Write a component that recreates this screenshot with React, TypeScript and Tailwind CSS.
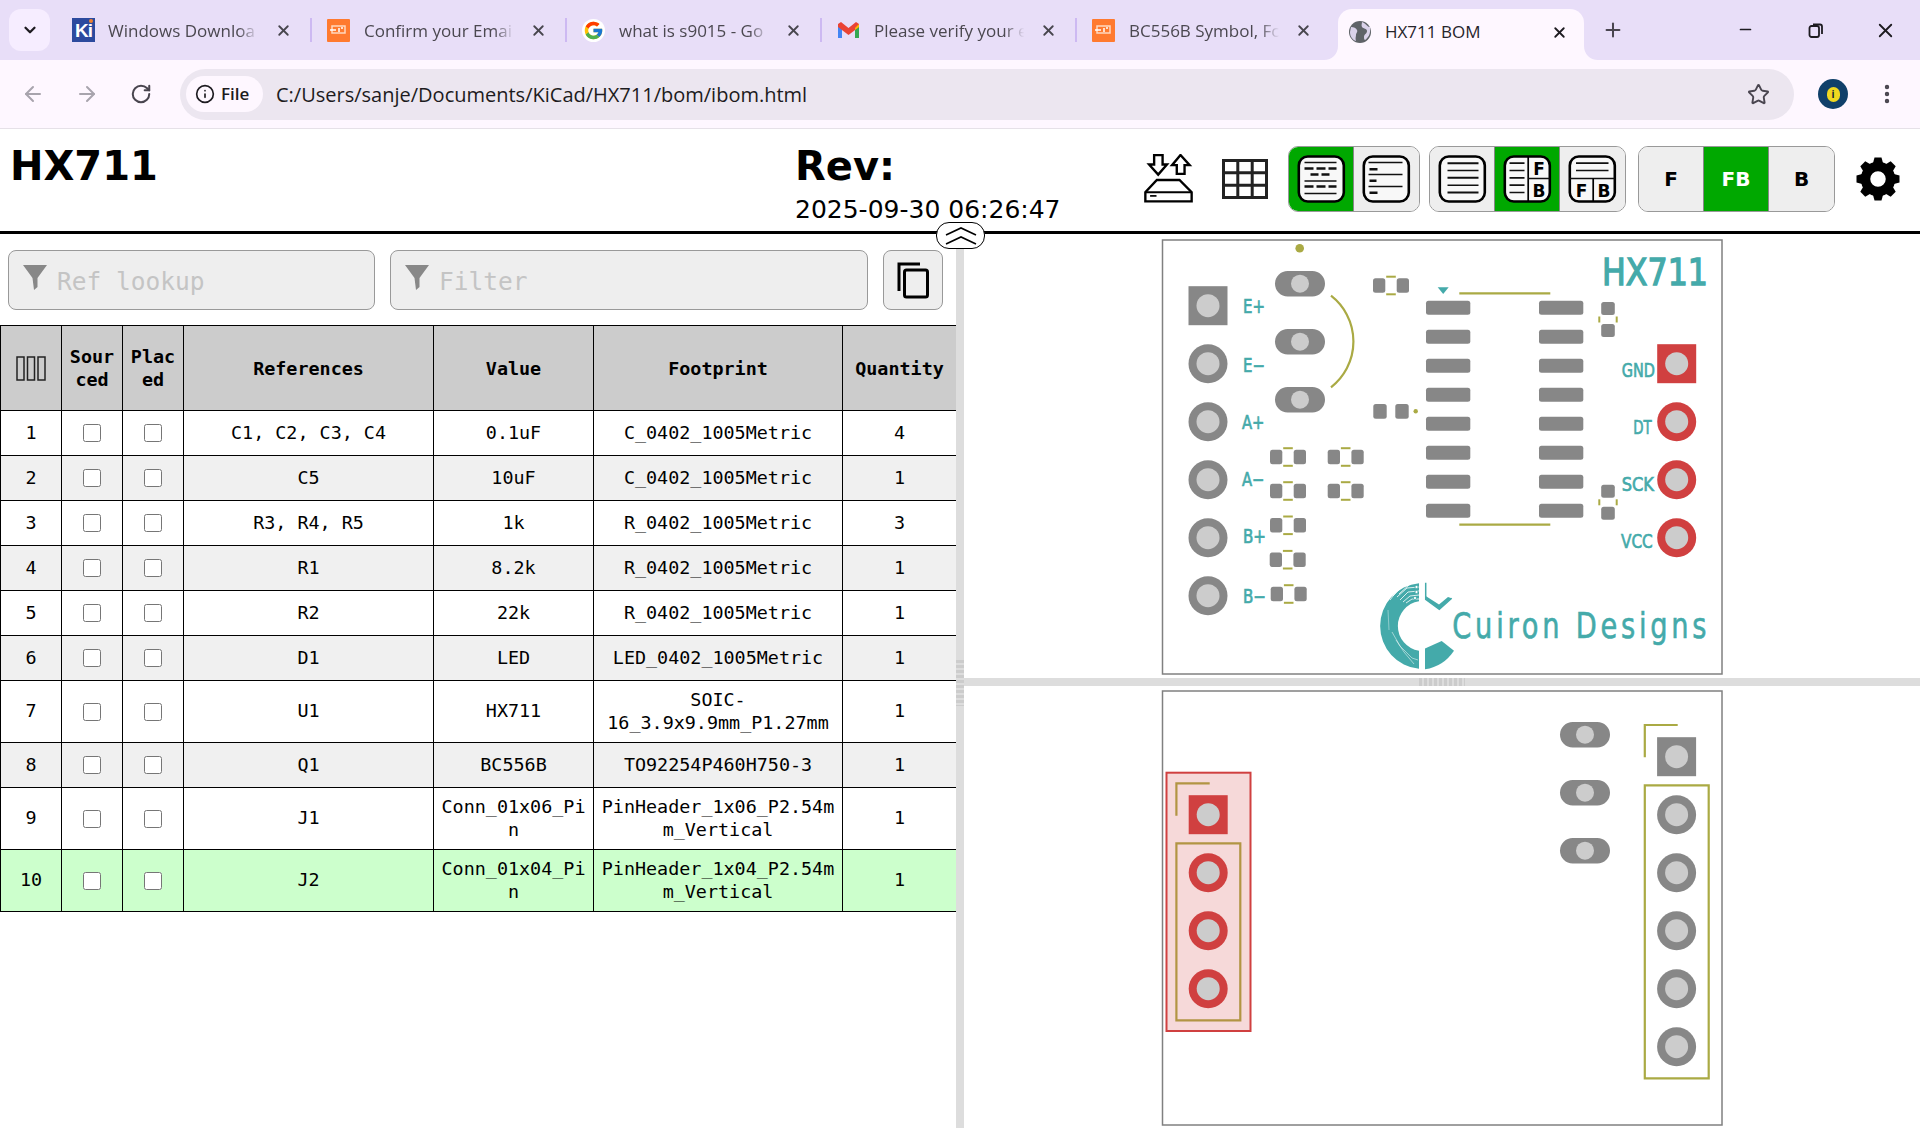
import React from "react";
import { FcGoogle } from "react-icons/fc";
import { ArrowLeft, ArrowRight, RotateCw, Info, Star, EllipsisVertical, Plus, X, ChevronDown, Minus } from "lucide-react";

const PAD = "#878787";
const HOLE = "#cccccc";
const RED = "#d04040";
const SILK = "#aaaa44";
const TEAL = "#44aaaa";

function Orange() {
  return (
    <svg width="23" height="23" viewBox="0 0 23 23" className="shrink-0">
      <rect width="23" height="23" fill="#ff7a2f" rx="1" />
      <rect x="5" y="7" width="13" height="7" fill="none" stroke="#ffd9c0" strokeWidth="1.5" />
      <path d="M3 11h6M12 9v4M15 8v2" stroke="#fff" strokeWidth="1.5" />
    </svg>
  );
}
function KiIcon() {
  return (
    <div className="relative w-[23px] h-[24px] shrink-0 bg-[#2c4a9e] flex items-center justify-center text-white font-bold text-[19px] leading-none font-['Liberation_Sans',sans-serif] tracking-[-1px]">
      Ki
      <div className="absolute right-[2px] top-[1px] w-[4px] h-[4px] bg-[#f08030] rounded-full" />
    </div>
  );
}
function GoogleIcon() {
  return (
    <div className="w-[23px] h-[23px] shrink-0 rounded-full bg-white flex items-center justify-center">
      <FcGoogle size={21} />
    </div>
  );
}
function GmailIcon() {
  return (
    <svg width="23" height="23" viewBox="0 0 23 23" className="shrink-0">
      <path d="M1 5v14h4V9z" fill="#4285f4" />
      <path d="M22 5v14h-4V9z" fill="#34a853" />
      <path d="M1 5l3-2 7.5 6L19 3l3 2v3l-10.500 8L1 8z" fill="#ea4335" />
      <path d="M18 9l4-4v3l-4 3z" fill="#fbbc04" />
    </svg>
  );
}
function GlobeIcon() {
  return (
    <svg width="22" height="22" viewBox="0 0 22 22" className="shrink-0">
      <circle cx="11" cy="11" r="11" fill="#5f6368" />
      <path d="M2 6c3 0 5 1 6 3s-1 3-1 5-1 3 0 6c-3-1-6-4-6-9zM20 6c-2-1-4-4-7-5 0 2-1 3 0 5s5 1 5 4-3 3-3 6 1 3 1 3c3-2 6-6 5-13z" fill="#e8def8" opacity="0.9" />
    </svg>
  );
}

const tabs = [
  { icon: <KiIcon />, text: "Windows Downloa", sep: true, ml: "ml-[13px]", xl: "ml-[12px]" },
  { icon: <Orange />, text: "Confirm your Emai", sep: true, ml: "ml-[14px]", xl: "ml-[11px]" },
  { icon: <GoogleIcon />, text: "what is s9015 - Go", sep: true, ml: "ml-[14px]", xl: "ml-[11px]" },
  { icon: <GmailIcon />, text: "Please verify your e", sep: true, ml: "ml-[14px]", xl: "ml-[11px]" },
  { icon: <Orange />, text: "BC556B Symbol, Fc", sep: false, ml: "ml-[14px]", xl: "ml-[11px]" },
];

function TabBar() {
  return (
    <div className="h-[60px] bg-[#e8def8] flex shrink-0 font-['Open_Sans',sans-serif]">
      <div className="ml-[9px] mt-[9px] w-[41px] h-[42px] rounded-[12px] bg-[#f6edff] flex items-center justify-center text-[#1d1b20]">
        <ChevronDown size={18} strokeWidth={3} />
      </div>
      <div className="ml-[7px] flex">
        {tabs.map((t) => (
          <div key={t.text} className="relative w-[255px] h-[60px] flex items-center pl-[15px]">
            <div className="w-[23px] flex justify-center">{t.icon}</div>
            <div className={t.ml + " w-[155px] pt-[2px] overflow-hidden whitespace-nowrap text-[17px] text-[#4b4850] [mask-image:linear-gradient(90deg,#000_84%,transparent_97%)]"}>
              {t.text}
            </div>
            <X size={17} strokeWidth={2.6} className={t.xl + " text-[#47454d]"} />
            {t.sep && <div className="absolute right-0 top-[18px] w-[2px] h-[24px] bg-[#cdb9f2]" />}
          </div>
        ))}
      </div>
      <div className="relative ml-[6px] mt-[9px] w-[246px] h-[51px] rounded-t-[14px] bg-[#fef7ff] flex items-center pl-[11px] pb-[5px]">
        <GlobeIcon />
        <div className="ml-[14px] w-[166px] overflow-hidden whitespace-nowrap text-[17px] text-[#26242a]">HX711 BOM</div>
        <X size={17} strokeWidth={2.6} className="text-[#1d1b20]" />
        <svg className="absolute -left-[14px] bottom-0" width="14" height="14" viewBox="0 0 14 14">
          <path d="M14 0v14H0c8 0 14-6 14-14z" fill="#fef7ff" />
        </svg>
        <svg className="absolute -right-[14px] bottom-0" width="14" height="14" viewBox="0 0 14 14">
          <path d="M0 0v14h14C6 14 0 8 0 0z" fill="#fef7ff" />
        </svg>
      </div>
      <Plus size={22} strokeWidth={2.2} className="ml-[18px] mt-[19px] text-[#49454f]" />
      <Minus size={17} strokeWidth={2.4} className="ml-[113px] mt-[21px] text-[#1d1b20]" />
      <svg width="18" height="18" viewBox="0 0 18 18" className="ml-[53px] mt-[21px]">
        <rect x="2.500" y="5" width="9.500" height="11" rx="2" fill="none" stroke="#1d1b20" strokeWidth="1.800" />
        <path d="M6 3.500 H13 A2 2 0 0 1 15 5.500 V13" fill="none" stroke="#1d1b20" strokeWidth="1.800" />
      </svg>
      <X size={23} strokeWidth={1.900} className="ml-[49px] mt-[19px] text-[#1d1b20]" />
    </div>
  );
}

function Toolbar() {
  return (
    <div className="h-[69px] shrink-0 bg-[#fef7ff] border-b border-[#e6e1e8] flex items-center font-['Open_Sans',sans-serif]">
      <ArrowLeft size={24} strokeWidth={2} className="ml-[21px] text-[#a8a4ad]" />
      <ArrowRight size={24} strokeWidth={2} className="ml-[30px] text-[#a8a4ad]" />
      <RotateCw size={22} strokeWidth={2.200} className="ml-[31px] text-[#49454f]" />
      <div className="ml-[28px] w-[1614px] h-[51px] rounded-full bg-[#ece6f0] flex items-center pl-[6px]">
        <div className="w-[77px] h-[36px] rounded-full bg-[#fef7ff] flex items-center pl-[9px] gap-[6px] text-[#1d1b20] text-[17px] font-semibold">
          <Info size={20} strokeWidth={2} />
          File
        </div>
        <div className="ml-[13px] pt-[2px] text-[20px] text-[#1d1b20] whitespace-nowrap">C:/Users/sanje/Documents/KiCad/HX711/bom/ibom.html</div>
        <Star size={23} strokeWidth={2} className="ml-auto mr-[24px] text-[#49454f]" />
      </div>
      <div className="ml-[24px] w-[30px] h-[30px] rounded-full bg-[#10406a] flex items-center justify-center">
        <div className="w-[13px] h-[15px] rounded-full bg-[#f0d820] flex items-center justify-center text-[10px] font-bold text-[#123] leading-none">i</div>
      </div>
      <EllipsisVertical size={24} strokeWidth={2.400} className="ml-[27px] text-[#49454f]" />
    </div>
  );
}

function Frame({ children }: { children?: React.ReactNode }) {
  return (
    <svg width="65" height="64" viewBox="0.500 0.500 65 64" className="shrink-0">
      <rect x="10.300" y="10" width="45" height="45" rx="9" fill="#f8f8f8" stroke="#000" strokeWidth="2.600" />
      {children}
    </svg>
  );
}
function L({ x1, x2, y, w = 1.300 }: { x1: number; x2: number; y: number; w?: number }) {
  return <line x1={x1} x2={x2} y1={y} y2={y} stroke="#111" strokeWidth={w} />;
}
const iconLetter = "fill-black font-bold text-[17px] font-['DejaVu_Sans',sans-serif]";

function Icon1() {
  const dash = (y: number, xs: number[][]) => xs.map((x, i) => <L key={y + "-" + i} x1={x[0]} x2={x[1]} y={y} w={2.400} />);
  const three = [[16, 25], [28, 37], [40, 48]];
  return (
    <Frame>
      <L x1={16} x2={48} y={16} />
      {dash(22, three)}
      {dash(28, [[22, 30], [33, 41]])}
      <L x1={16} x2={48} y={34.500} />
      {dash(40, three)}
      <L x1={16} x2={48} y={47} />
    </Frame>
  );
}
function Icon2() {
  return (
    <Frame>
      <L x1={15} x2={49} y={16} />
      <L x1={16} x2={24} y={22.700} w={2.400} />
      <L x1={15} x2={49} y={28} />
      <L x1={16} x2={23} y={34.300} w={2.400} />
      <L x1={15} x2={49} y={40} />
      <L x1={16} x2={24} y={46.300} w={2.400} />
    </Frame>
  );
}
function Icon3() {
  return (
    <Frame>
      {[16.700, 24, 31.300, 38.700, 46].map((y, i) => (
        <L key={y} x1={18} x2={49} y={y} w={i % 2 ? 1.500 : 2} />
      ))}
    </Frame>
  );
}
function Icon4() {
  return (
    <Frame>
      {[16.700, 24, 31.300, 38.700, 46].map((y) => (
        <L key={y} x1={15} x2={30} y={y} w={1.700} />
      ))}
      <line x1={33.700} x2={33.700} y1={10} y2={55} stroke="#000" strokeWidth={1.700} />
      <L x1={33.700} x2={55} y={32} w={1.700} />
      <text x={44.500} y={28} textAnchor="middle" className={iconLetter}>F</text>
      <text x={44.500} y={50} textAnchor="middle" className={iconLetter}>B</text>
    </Frame>
  );
}
function Icon5() {
  return (
    <Frame>
      <L x1={16.500} x2={49} y={16.700} w={1.700} />
      <L x1={16.500} x2={49} y={24} w={1.700} />
      <L x1={10} x2={55} y={32} w={1.700} />
      <line x1={33.700} x2={33.700} y1={32} y2={55} stroke="#000" strokeWidth={1.700} />
      <text x={22} y={50} textAnchor="middle" className={iconLetter}>F</text>
      <text x={44.500} y={50} textAnchor="middle" className={iconLetter}>B</text>
    </Frame>
  );
}

function Seg({ on, last, children }: { on?: boolean; last?: boolean; children: React.ReactNode }) {
  return (
    <div className={(on ? "bg-[#00a800] " : "bg-[#eeeeee] ") + (last ? "" : "border-r border-[#888888] ") + "w-[65px] h-full flex items-center justify-center overflow-hidden"}>
      {children}
    </div>
  );
}
const segGroup = "h-[66px] flex rounded-[10px] border border-[#999999] overflow-hidden";
const segLetter = "font-['DejaVu_Sans',sans-serif] font-bold text-[20px]";

function Gear() {
  return (
    <svg width="44" height="44" viewBox="-22 -22 44 44">
      {[0, 45, 90, 135, 180, 225, 270, 315].map((a) => (
        <path key={a} d="M-5.500 -14 L-3.500 -21.500 H3.500 L5.500 -14 Z" fill="#000" transform={`rotate(${a})`} />
      ))}
      <circle r="12.500" fill="none" stroke="#000" strokeWidth="9.500" />
    </svg>
  );
}

function Header() {
  return (
    <div className="h-[105px] shrink-0 border-b-[3px] border-black bg-white flex text-black font-['DejaVu_Sans',sans-serif]">
      <div className="w-[795px] pl-[10px] pt-[14px] text-[40px] leading-[46px] font-bold">HX711</div>
      <div className="w-[349px] pt-[14px]">
        <div className="text-[40px] leading-[46px] font-bold">Rev:</div>
        <div className="text-[25px] leading-[30px] mt-[6px] whitespace-nowrap">2025-09-30 06:26:47</div>
      </div>
      <svg width="49" height="49" viewBox="45 47 145 145" className="mt-[25px]">
        <path d="M75 50H100V78H113L87 108L60 78H75Z" fill="#fff" stroke="#000" strokeWidth="7" />
        <path d="M142 106H165V80H180L153 50L128 80H142Z" fill="#fff" stroke="#000" strokeWidth="7" />
        <path d="M49 187V160L83 124H150L186 160V187Z" fill="#fff" stroke="#000" strokeWidth="7" />
        <path d="M49 160H186" stroke="#000" strokeWidth="6" />
        <path d="M63 171H82" stroke="#000" strokeWidth="5" />
      </svg>
      <svg width="46" height="40" viewBox="0 0 46 40" className="ml-[29px] mt-[30px]">
        <path d="M1.500 1.500H44.500V38.500H1.500ZM15.800 1.500V38.500M30.200 1.500V38.500M1.500 13.800H44.500M1.500 26.200H44.500" fill="none" stroke="#222" strokeWidth="3" />
      </svg>
      <div className={segGroup + " ml-[20px] mt-[17px]"}>
        <Seg on><Icon1 /></Seg>
        <Seg last><Icon2 /></Seg>
      </div>
      <div className={segGroup + " ml-[9px] mt-[17px]"}>
        <Seg><Icon3 /></Seg>
        <Seg on><Icon4 /></Seg>
        <Seg last><Icon5 /></Seg>
      </div>
      <div className={segGroup + " ml-[12px] mt-[17px]"}>
        <Seg><span className={segLetter}>F</span></Seg>
        <Seg on><span className={segLetter + " text-white"}>FB</span></Seg>
        <Seg last><span className={segLetter}>B</span></Seg>
      </div>
      <div className="ml-[21px] mt-[28px]"><Gear /></div>
    </div>
  );
}

function Funnel() {
  return (
    <svg width="24" height="25" viewBox="0 0 24 25" className="absolute left-[15px] top-[15px]">
      <path d="M0 0H24L14.500 13V22L11 25L9.500 13Z" fill="#888888" />
    </svg>
  );
}
function FilterBox({ w, placeholder }: { w: string; placeholder: string }) {
  return (
    <div className={"relative h-[60px] " + w}>
      <Funnel />
      <input
        readOnly
        placeholder={placeholder}
        className="w-full h-full rounded-[8px] border border-[#999999] bg-[#eeeeee] pl-[48px] pt-[2px] text-[24.500px] font-['DejaVu_Sans_Mono',monospace] placeholder:text-[#c4c4c4] outline-none"
      />
    </div>
  );
}

const rows = [
  ["1", "C1, C2, C3, C4", "0.1uF", "C_0402_1005Metric", "4"],
  ["2", "C5", "10uF", "C_0402_1005Metric", "1"],
  ["3", "R3, R4, R5", "1k", "R_0402_1005Metric", "3"],
  ["4", "R1", "8.2k", "R_0402_1005Metric", "1"],
  ["5", "R2", "22k", "R_0402_1005Metric", "1"],
  ["6", "D1", "LED", "LED_0402_1005Metric", "1"],
  ["7", "U1", "HX711", "SOIC-16_3.9x9.9mm_P1.27mm", "1"],
  ["8", "Q1", "BC556B", "TO92254P460H750-3", "1"],
  ["9", "J1", "Conn_01x06_Pin", "PinHeader_1x06_P2.54mm_Vertical", "1"],
  ["10", "J2", "Conn_01x04_Pin", "PinHeader_1x04_P2.54mm_Vertical", "1"],
];

const th = "border border-black px-[7px] py-[4px] font-bold [overflow-wrap:break-word]";
const td = "border border-black px-[7px] pt-[6.500px] pb-[8.500px] [overflow-wrap:break-word]";
const tdBox = "border border-black px-[7px] py-[7.500px]";

function BomTable() {
  return (
    <table className="w-[956px] table-fixed border-collapse text-center text-[18.400px] leading-[23px] text-black font-['DejaVu_Sans_Mono',monospace]">
      <colgroup>
        <col className="w-[61px]" />
        <col className="w-[61px]" />
        <col className="w-[61px]" />
        <col className="w-[250px]" />
        <col className="w-[160px]" />
        <col className="w-[249px]" />
        <col className="w-[114px]" />
      </colgroup>
      <thead>
        <tr className="h-[85px] bg-[#cccccc]">
          <th className={th}>
            <svg width="30" height="25" viewBox="0 0 30 25" className="inline-block align-middle">
              <path d="M1 1H8V24H1ZM11.500 1H18.500V24H11.500ZM22 1H29V24H22Z" fill="none" stroke="#222" strokeWidth="1.500" />
            </svg>
          </th>
          <th className={th}>Sourced</th>
          <th className={th}>Placed</th>
          <th className={th}>References</th>
          <th className={th}>Value</th>
          <th className={th}>Footprint</th>
          <th className={th}>Quantity</th>
        </tr>
      </thead>
      <tbody>
        {rows.map((r, i) => (
          <tr key={r[0]} className={(i === 9 ? "bg-[#ccffcc] " : i % 2 ? "bg-[#f0f0f0] " : "bg-white ") + "h-[45px]"}>
            <td className={td}>{r[0]}</td>
            <td className={tdBox}><input type="checkbox" readOnly className="block mx-auto w-[18px] h-[18px]" /></td>
            <td className={tdBox}><input type="checkbox" readOnly className="block mx-auto w-[18px] h-[18px]" /></td>
            <td className={td}>{r[1]}</td>
            <td className={td}>{r[2]}</td>
            <td className={td}>{r[3]}</td>
            <td className={td}>{r[4]}</td>
          </tr>
        ))}
      </tbody>
    </table>
  );
}

function Through({ x, y, square, red, r = 19.500 }: { x: number; y: number; square?: boolean; red?: boolean; r?: number }) {
  const c = red ? RED : PAD;
  return (
    <g>
      {square ? <rect x={x - r} y={y - r} width={r * 2} height={r * 2} fill={c} /> : <circle cx={x} cy={y} r={r} fill={c} />}
      <circle cx={x} cy={y} r={11.500} fill={HOLE} />
    </g>
  );
}
function Oval({ x, y }: { x: number; y: number }) {
  return (
    <g>
      <rect x={x - 25} y={y - 12.700} width={50} height={25.400} rx={12.700} fill={PAD} />
      <circle cx={x} cy={y} r={9} fill={HOLE} />
    </g>
  );
}
function Chip({ x, y }: { x: number; y: number }) {
  return (
    <g>
      <rect x={x - 18} y={y - 7.300} width={12.300} height={14.600} rx={2.500} fill={PAD} />
      <rect x={x + 5.700} y={y - 7.300} width={12.300} height={14.600} rx={2.500} fill={PAD} />
      <line x1={x - 4.800} x2={x + 4.800} y1={y - 8.800} y2={y - 8.800} stroke={SILK} strokeWidth={2} />
      <line x1={x - 4.800} x2={x + 4.800} y1={y + 8.800} y2={y + 8.800} stroke={SILK} strokeWidth={2} />
    </g>
  );
}
function VChip({ x, y }: { x: number; y: number }) {
  return (
    <g>
      <rect x={x - 6.800} y={y - 17.500} width={13.600} height={13} rx={2.500} fill={PAD} />
      <rect x={x - 6.800} y={y + 4.500} width={13.600} height={13} rx={2.500} fill={PAD} />
      <line x1={x - 8.700} x2={x - 8.700} y1={y - 3} y2={y + 3} stroke={SILK} strokeWidth={2} />
      <line x1={x + 8.700} x2={x + 8.700} y1={y - 3} y2={y + 3} stroke={SILK} strokeWidth={2} />
    </g>
  );
}
function Label({ x, y, w, size = 19, sw = 0.700, children }: { x: number; y: number; w: number; size?: number; sw?: number; children: React.ReactNode }) {
  return (
    <text x={x} y={y} fontSize={size} textLength={w} lengthAdjust="spacingAndGlyphs" fill={TEAL} stroke={TEAL} strokeWidth={sw}>
      {children}
    </text>
  );
}
function Logo() {
  return (
    <g>
      <path d="M1419 583.200A43 43 0 0 0 1419 668.800L1419 650.700A25 25 0 0 1 1419 601.300Z" fill={TEAL} />
      <path d="M1425 648.500L1441.700 641L1454 650.700A43 43 0 0 1 1425 669.300Z" fill={TEAL} />
      <path d="M1425.700 582.700V599.300L1439.300 609.300L1451.700 598.300" fill="none" stroke={TEAL} strokeWidth="1.500" />
      <path d="M1439.300 609.300L1451.700 598.300L1448 597L1439 604.500L1425.700 596V599.300Z" fill={TEAL} />
      <g fill="none" stroke="#ffffff" strokeWidth="0.800">
        <path d="M1419 587L1407 588L1397 597" />
        <path d="M1419 591L1408 592L1400 600" />
        <path d="M1419 595L1410 596L1403 602" />
        <path d="M1419 599L1412 599L1406 603" />
        <path d="M1404 585L1393 596M1399 588L1390 600M1410 584L1399 594" />
        <path d="M1392 632L1400 646L1412 658L1418 660" strokeWidth="0.500" />
        <path d="M1396 640L1404 652L1414 664" strokeWidth="0.500" />
        <path d="M1388 610L1389 630" strokeWidth="0.400" />
      </g>
      <g fill="#ffffff" stroke={TEAL} strokeWidth="0.800">
        <circle cx="1416.500" cy="587" r="1.600" />
        <circle cx="1416.500" cy="592" r="1.600" />
        <circle cx="1415" cy="598" r="1.600" />
      </g>
    </g>
  );
}

const uRows = [307.700, 336.700, 365.700, 394.700, 423.700, 452.700, 481.700, 510.700];

function TopBoard() {
  return (
    <svg viewBox="964 234 956 444" className="w-full h-full block bg-white font-['DejaVu_Sans',sans-serif]">
      <rect x="1162.500" y="240" width="559.500" height="434" fill="#fff" stroke="#808080" strokeWidth="1.500" />
      <circle cx="1299.700" cy="248.300" r="4.300" fill={SILK} />
      <path d="M1331 295.700A58 58 0 0 1 1331 387.300" fill="none" stroke={SILK} strokeWidth="2.200" />
      <Through x={1208} y={305.700} square />
      {[363.700, 421.700, 479.700, 537.700, 595.700].map((y) => <Through key={y} x={1208} y={y} />)}
      {[283.700, 341.700, 399.700].map((y) => <Oval key={y} x={1300} y={y} />)}
      {[[1391, 285.500], [1288, 457], [1345.700, 457], [1288, 491], [1345.700, 491], [1288, 525.300], [1287.700, 559.700], [1288.700, 594]].map(([x, y]) => (
        <Chip key={x + "-" + y} x={x} y={y} />
      ))}
      <rect x="1373.300" y="404" width="13.400" height="14.700" rx="2.500" fill={PAD} />
      <rect x="1395.300" y="404" width="13.400" height="14.700" rx="2.500" fill={PAD} />
      <circle cx="1415.700" cy="411.300" r="2.200" fill={SILK} />
      {uRows.map((y) => (
        <g key={y}>
          <rect x="1426" y={y - 7} width="44.300" height="14" rx="2.500" fill={PAD} />
          <rect x="1539" y={y - 7} width="44.300" height="14" rx="2.500" fill={PAD} />
        </g>
      ))}
      <line x1="1459.300" x2="1550.300" y1="293.300" y2="293.300" stroke={SILK} strokeWidth="2.200" />
      <line x1="1459.300" x2="1550.300" y1="524.700" y2="524.700" stroke={SILK} strokeWidth="2.200" />
      <path d="M1437.700 287.300H1448.700L1443.200 294Z" fill={TEAL} />
      <VChip x={1608} y={319.500} />
      <VChip x={1608} y={502.300} />
      <Through x={1676.700} y={363.700} square red />
      {[421.700, 479.700, 537.700].map((y) => <Through key={y} x={1676.700} y={y} red />)}
      <Label x={1243} y={312.700} w={22}>E+</Label>
      <Label x={1243} y={372} w={22}>E−</Label>
      <Label x={1242} y={429.300} w={22.500}>A+</Label>
      <Label x={1242} y={486} w={22.500}>A−</Label>
      <Label x={1243} y={543.300} w={23}>B+</Label>
      <Label x={1243} y={602.700} w={23}>B−</Label>
      <Label x={1621.700} y={376.500} w={33.300}>GND</Label>
      <Label x={1633.300} y={434} w={18.400}>DT</Label>
      <Label x={1621.700} y={490.700} w={32.300}>SCK</Label>
      <Label x={1621} y={548} w={31.700}>VCC</Label>
      <Label x={1602} y={285} w={106} size={37} sw={1.400}>HX711</Label>
      <text transform="translate(1452.300 638) scale(0.780 1)" fontSize={35} textLength={326} lengthAdjust="spacing" fill={TEAL} stroke={TEAL} strokeWidth={0.600}>
        Cuiron Designs
      </text>
      <Logo />
    </svg>
  );
}

function BottomBoard() {
  return (
    <svg viewBox="964 686 956 442" className="w-full h-full block bg-white">
      <rect x="1162.500" y="691" width="559.500" height="434" fill="#fff" stroke="#808080" strokeWidth="1.500" />
      <path d="M1209.700 783.300H1176.400V815.700M1176.400 843.300H1240.300V1020.300H1176.400Z" fill="none" stroke={SILK} strokeWidth="2.200" />
      <rect x="1166.500" y="772.700" width="84" height="258.300" fill={RED} fillOpacity="0.200" stroke={RED} strokeWidth="2" />
      <Through x={1208.200} y={814.700} square red />
      {[872.700, 930.700, 988.700].map((y) => <Through key={y} x={1208.200} y={y} red />)}
      <path d="M1677.700 725H1644.800V757.300M1644.800 785.300H1708.700V1078.300H1644.800Z" fill="none" stroke={SILK} strokeWidth="2.200" />
      <Through x={1676.600} y={756.700} square />
      {[814.700, 872.700, 930.700, 988.700, 1046.700].map((y) => <Through key={y} x={1676.600} y={y} />)}
      {[734.700, 792.700, 850.700].map((y) => <Oval key={y} x={1585} y={y} />)}
    </svg>
  );
}

export default function App() {
  return (
    <div className="relative w-[1920px] h-[1128px] overflow-hidden bg-white flex flex-col">
      <TabBar />
      <Toolbar />
      <Header />
      <div className="flex-1 min-h-0 flex">
        <div className="w-[956px] shrink-0 flex flex-col">
          <div className="flex pl-[8px] pt-[16px] pb-[15px]">
            <FilterBox w="w-[367px]" placeholder="Ref lookup" />
            <div className="ml-[15px]"><FilterBox w="w-[478px]" placeholder="Filter" /></div>
            <div className="ml-[15px] w-[60px] h-[60px] rounded-[8px] border border-[#999999] bg-[#eeeeee] flex items-center justify-center">
              <svg width="34" height="37" viewBox="0 0 34 37">
                <path d="M24 2H3V29" fill="none" stroke="#000" strokeWidth="3" />
                <rect x="8.500" y="8" width="23" height="27" rx="2" fill="none" stroke="#000" strokeWidth="3" />
              </svg>
            </div>
          </div>
          <BomTable />
        </div>
        <div className="w-[8px] shrink-0 bg-[#dddddd] flex items-center justify-center">
          <div className="w-[8px] h-[46px] mb-[-4px] bg-[repeating-linear-gradient(180deg,#cccccc_0_3px,transparent_3px_5px)]" />
        </div>
        <div className="flex-1 flex flex-col">
          <div className="h-[444px]"><TopBoard /></div>
          <div className="h-[8px] bg-[#dddddd] flex justify-center">
            <div className="w-[46px] h-[8px] bg-[repeating-linear-gradient(90deg,#cccccc_0_3px,transparent_3px_5px)]" />
          </div>
          <div className="flex-1 min-h-0"><BottomBoard /></div>
        </div>
      </div>
      <div className="absolute left-[936px] top-[222px] w-[49px] h-[27px] rounded-[13px] border border-black bg-white flex items-center justify-center">
        <svg width="34" height="20" viewBox="0 0 34 20">
          <path d="M2 9L17 2L32 9M2 18L17 11L32 18" fill="none" stroke="#000" strokeWidth="1.600" />
        </svg>
      </div>
    </div>
  );
}
